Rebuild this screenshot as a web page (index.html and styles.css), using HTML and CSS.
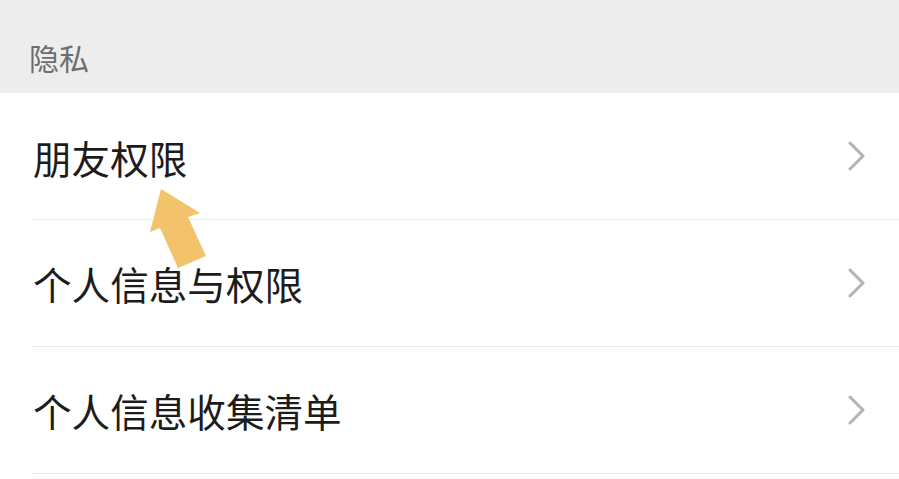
FILE: index.html
```html
<!DOCTYPE html>
<html lang="zh">
<head>
<meta charset="utf-8">
<link rel="stylesheet" href="styles.css">
</head>
<body>
<div class="page">
  <div class="section-title">隐私</div>
  <ul class="list">
    <li class="row"><span class="label">朋友权限</span><svg class="chev" viewBox="0 0 18 30" width="18" height="30"><path d="M2 2 L15 15 L2 28" fill="none" stroke="#b3b3b3" stroke-width="3" stroke-linecap="round" stroke-linejoin="round"/></svg></li>
    <li class="row"><span class="label">个人信息与权限</span><svg class="chev" viewBox="0 0 18 30" width="18" height="30"><path d="M2 2 L15 15 L2 28" fill="none" stroke="#b3b3b3" stroke-width="3" stroke-linecap="round" stroke-linejoin="round"/></svg></li>
    <li class="row"><span class="label">个人信息收集清单</span><svg class="chev" viewBox="0 0 18 30" width="18" height="30"><path d="M2 2 L15 15 L2 28" fill="none" stroke="#b3b3b3" stroke-width="3" stroke-linecap="round" stroke-linejoin="round"/></svg></li>
  </ul>
  <svg class="arrow" viewBox="0 0 899 479" width="899" height="479"><polygon points="161,189 200,213 188,217 206,256 178,268 160,228 150,232" fill="#f2c36b"/></svg>
</div>
</body>
</html>
```
FILE: styles.css
```css
html, body {
  margin: 0;
  padding: 0;
  background: #ffffff;
}
body {
  font-family: "Noto Sans CJK SC", "Noto Sans", sans-serif;
  overflow: hidden;
}
.page {
  position: relative;
  width: 899px;
  height: 479px;
  overflow: hidden;
}
.section-title {
  height: 93px;
  background: #ededed;
  color: #6e6e6e;
  font-size: 30px;
  line-height: 30px;
  box-sizing: border-box;
  padding: 42px 0 0 29px;
}
.list {
  list-style: none;
  margin: 0;
  padding: 0 0 0 32px;
}
.row {
  height: 126px;
  display: flex;
  align-items: center;
  justify-content: space-between;
  border-bottom: 1.5px solid #ececec;
  padding-right: 33px;
  box-sizing: content-box;
}
.row:first-child .label { margin-top: 2px; }
.label {
  font-size: 38.6px;
  color: #1c1c1c;
  line-height: 1;
  margin-left: 1px;
}
.chev {
  display: block;
}
.arrow {
  position: absolute;
  left: 0;
  top: 0;
  pointer-events: none;
}
```
